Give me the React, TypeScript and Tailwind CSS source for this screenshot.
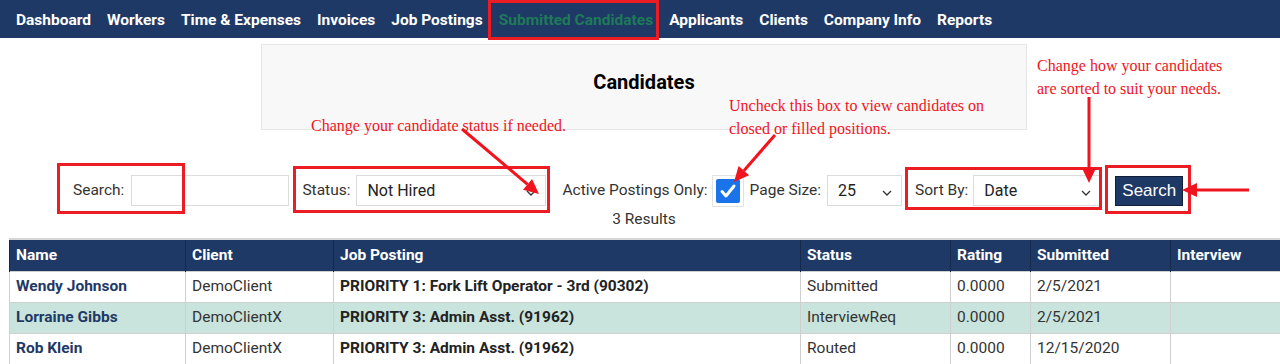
import React from 'react';

const navItems = [
  'Dashboard',
  'Workers',
  'Time & Expenses',
  'Invoices',
  'Job Postings',
  'Submitted Candidates',
  'Applicants',
  'Clients',
  'Company Info',
  'Reports',
];

const columns = [
  { label: 'Name', w: 'w-[176px]' },
  { label: 'Client', w: 'w-[148px]' },
  { label: 'Job Posting', w: 'w-[467px]' },
  { label: 'Status', w: 'w-[150px]' },
  { label: 'Rating', w: 'w-[80px]' },
  { label: 'Submitted', w: 'w-[140px]' },
  { label: 'Interview', w: 'w-[112px]' },
];

const rows = [
  { name: 'Wendy Johnson', client: 'DemoClient', job: 'PRIORITY 1: Fork Lift Operator - 3rd (90302)', status: 'Submitted', rating: '0.0000', submitted: '2/5/2021' },
  { name: 'Lorraine Gibbs', client: 'DemoClientX', job: 'PRIORITY 3: Admin Asst. (91962)', status: 'InterviewReq', rating: '0.0000', submitted: '2/5/2021' },
  { name: 'Rob Klein', client: 'DemoClientX', job: 'PRIORITY 3: Admin Asst. (91962)', status: 'Routed', rating: '0.0000', submitted: '12/15/2020' },
];

const Chevron = () => (
  <svg width="12" height="8" viewBox="0 0 12 8" fill="none" stroke="#333" strokeWidth="1.3" className="mt-[4px]">
    <path d="M2 2l4 4 4-4" />
  </svg>
);

const FakeSelect: React.FC<{ value: string; w: string }> = ({ value, w }) => (
  <div className={`${w} shrink-0 h-[31px] border border-[#dcdcdc] bg-white flex items-center justify-between pl-[10px] pr-[8px] text-[16px] text-[#222]`}>
    <span>{value}</span>
    <Chevron />
  </div>
);

// arrow line + head, drawn over the page
const Arrow: React.FC<{ x1: number; y1: number; x2: number; y2: number }> = ({ x1, y1, x2, y2 }) => {
  const a = Math.atan2(y2 - y1, x2 - x1);
  const len = 15;
  const half = 7;
  const bx = x2 - len * Math.cos(a);
  const by = y2 - len * Math.sin(a);
  const px = -Math.sin(a) * half;
  const py = Math.cos(a) * half;
  return (
    <g>
      <line x1={x1} y1={y1} x2={bx} y2={by} stroke="#f0141e" strokeWidth="3" />
      <polygon points={`${x2},${y2} ${bx + px},${by + py} ${bx - px},${by - py}`} fill="#f0141e" />
    </g>
  );
};

export default function App() {
  return (
    <div className="relative w-[1280px] h-[364px] overflow-hidden bg-white font-['Roboto',sans-serif] text-[#333]">
      {/* nav */}
      <nav className="h-[38px] bg-[#1f3966] flex items-center gap-[16px] pl-[16px] pt-[4px]">
        {navItems.map((item) => (
          <span
            key={item}
            className={`text-[15.5px] font-bold ${item === 'Submitted Candidates' ? 'text-[#1e7a58]' : 'text-white'}`}
          >
            {item}
          </span>
        ))}
      </nav>

      {/* title box */}
      <div className="ml-[261px] mt-[6px] w-[766px] h-[86px] bg-[#f8f8f8] border border-[#e6e6e6] flex items-center justify-center pb-[10px]">
        <h1 className="text-[20px] font-bold text-black">Candidates</h1>
      </div>

      {/* filters */}
      <div className="mt-[45px] h-[31px] flex items-center pl-[73px] text-[15.5px]">
        <span>Search:</span>
        <input className="ml-[7px] w-[158px] shrink-0 h-[31px] border border-[#dcdcdc] outline-none" />
        <span className="ml-[13px]">Status:</span>
        <div className="ml-[6px]">
          <FakeSelect value="Not Hired" w="w-[190px]" />
        </div>
        <span className="ml-[16px]">Active Postings Only:</span>
        <span className="ml-[4px] shrink-0 w-[32px] h-[32px] border border-[#e2e2e2] flex items-center justify-center">
          <span className="w-[24px] h-[24px] rounded-[2px] bg-[#1a73e8] flex items-center justify-center">
            <svg width="18" height="16" viewBox="0 0 18 16" fill="none" stroke="white" strokeWidth="3" strokeLinecap="round" strokeLinejoin="round">
              <path d="M3 8.5l4 4.5L15 3" />
            </svg>
          </span>
        </span>
        <span className="ml-[6px]">Page Size:</span>
        <div className="ml-[6px]">
          <FakeSelect value="25" w="w-[75px]" />
        </div>
        <span className="ml-[13px]">Sort By:</span>
        <div className="ml-[5px]">
          <FakeSelect value="Date" w="w-[128px]" />
        </div>
        <button className="ml-[14px] shrink-0 h-[30px] px-[6px] bg-[#1f3966] border border-[#0f1f3a] text-white text-[17px] font-['Liberation_Sans',Arial,sans-serif]">
          Search
        </button>
      </div>

      <div className="ml-[261px] w-[766px] mt-[4px] text-center text-[15.5px] leading-[18px]">3 Results</div>

      {/* table */}
      <table className="ml-[9px] mt-[10px] border-collapse border-t-2 border-[#d6d6d6] text-[15.5px] table-fixed w-[1273px]">
        <thead>
          <tr className="h-[32px] bg-[#1f3966] text-white">
            {columns.map((c) => (
              <th key={c.label} className={`${c.w} text-left font-bold px-[6px] border-x border-[#15294d]`}>
                {c.label}
              </th>
            ))}
          </tr>
        </thead>
        <tbody>
          {rows.map((r, i) => (
            <tr key={r.name} className={`h-[31px] ${i === 1 ? 'bg-[#c9e4dd]' : 'bg-white'}`}>
              <td className="px-[6px] border border-[#cfcfcf] font-bold text-[#1f3966]">{r.name}</td>
              <td className="px-[6px] border border-[#cfcfcf]">{r.client}</td>
              <td className="px-[6px] border border-[#cfcfcf] font-bold text-[#222]">{r.job}</td>
              <td className="px-[6px] border border-[#cfcfcf]">{r.status}</td>
              <td className="px-[6px] border border-[#cfcfcf]">{r.rating}</td>
              <td className="px-[6px] border border-[#cfcfcf]">{r.submitted}</td>
              <td className="px-[6px] border border-[#cfcfcf]"></td>
            </tr>
          ))}
        </tbody>
      </table>

      {/* markup: notes */}
      <div className="absolute left-[311px] top-[114px] font-['Liberation_Serif',serif] text-[16px] leading-[23px] text-[#f0141e]">
        Change your candidate status if needed.
      </div>
      <div className="absolute left-[729px] top-[94px] font-['Liberation_Serif',serif] text-[16px] leading-[23px] text-[#f0141e]">
        Uncheck this box to view candidates on
        <br />
        closed or filled positions.
      </div>
      <div className="absolute left-[1037px] top-[54px] font-['Liberation_Serif',serif] text-[16px] leading-[23px] text-[#f0141e]">
        Change how your candidates
        <br />
        are sorted to suit your needs.
      </div>

      {/* markup: boxes */}
      <div className="absolute left-[488px] top-0 w-[171px] h-[40px] border-[3px] border-[#ec1c24]" />
      <div className="absolute left-[57px] top-[163px] w-[128px] h-[51px] border-[3px] border-[#ec1c24]" />
      <div className="absolute left-[293px] top-[166px] w-[257px] h-[47px] border-[3px] border-[#ec1c24]" />
      <div className="absolute left-[905px] top-[167px] w-[197px] h-[43px] border-[3px] border-[#ec1c24]" />
      <div className="absolute left-[1105px] top-[165px] w-[86px] h-[49px] border-[3px] border-[#ec1c24]" />

      {/* markup: arrows */}
      <svg className="absolute left-0 top-0" width="1280" height="364">
        <Arrow x1={462} y1={129} x2={539} y2={194} />
        <Arrow x1={775} y1={135} x2={734} y2={182} />
        <Arrow x1={1089} y1={97} x2={1089} y2={183} />
        <Arrow x1={1249} y1={190} x2={1182} y2={190} />
      </svg>
    </div>
  );
}
